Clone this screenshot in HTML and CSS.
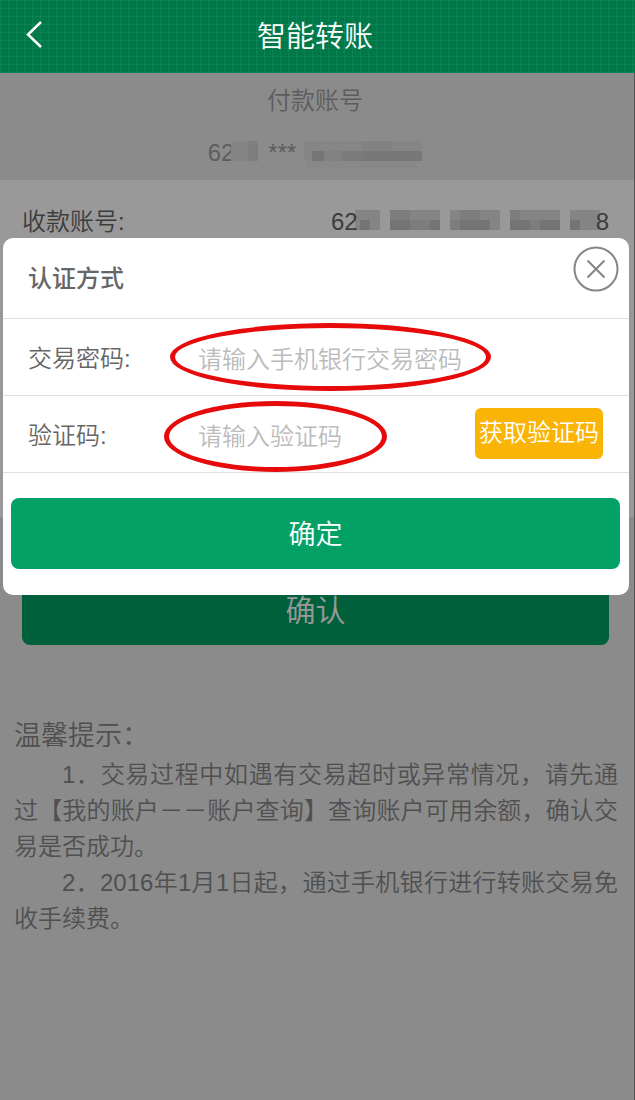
FILE: index.html
```html
<!DOCTYPE html>
<html lang="zh-CN">
<head>
	<meta charset="utf-8">
	<meta name="viewport" content="width=device-width, initial-scale=1">
	<title>智能转账</title>
	<link rel="stylesheet" href="styles.css">
</head>
<body>
	<header class="header">
		<a class="back" href="#" aria-label="返回">
			<svg width="18" height="28" viewBox="0 0 18 28"><path d="M16 2L3 14.5L16 27" fill="none" stroke="#fff" stroke-width="2.5"/></svg>
		</a>
		<h1 class="title">智能转账</h1>
	</header>

	<main class="page">
		<section class="payer">
			<p class="payer-label">付款账号</p>
			<p class="payer-number">
				<span>62</span>
				<svg class="mosaic" width="26" height="24" viewBox="0 0 26 24">
					<rect x="-3" y="0" width="27" height="20" fill="#dcdcdc"/>
					<rect x="14" y="0" width="10" height="20" fill="#000" opacity="0.04"/>
				</svg>
				<span class="stars">***</span>
				<svg class="mosaic" width="118" height="24" viewBox="0 0 118 24">
					<rect x="0" y="0" width="118" height="20" fill="#000" opacity="0.03"/>
					<rect x="58" y="0" width="30" height="10" fill="#000" opacity="0.03"/>
					<rect x="8" y="10" width="12" height="10" fill="#000" opacity="0.12"/>
					<rect x="20" y="10" width="18" height="10" fill="#000" opacity="0.04"/>
					<rect x="38" y="10" width="20" height="10" fill="#000" opacity="0.09"/>
					<rect x="58" y="10" width="60" height="10" fill="#000" opacity="0.1"/>
					<rect x="2" y="20" width="110" height="8" fill="#000" opacity="0.02"/>
				</svg>
			</p>
		</section>

		<section class="form">
			<div class="payee">
				<span>收款账号:</span>
				<span class="payee-number">
					<span>62</span>
					<svg class="mosaic" width="238" height="24" viewBox="0 0 238 24">
						<g fill="#000">
							<g opacity="0.13">
								<rect x="-3" width="25" height="20"/><rect x="32" width="50" height="20"/><rect x="92" width="50" height="20"/><rect x="152" width="50" height="20"/><rect x="212" width="30" height="20"/>
							</g>
							<g opacity="0.12">
								<rect x="2" y="10" width="10" height="10"/><rect x="32" y="10" width="20" height="10"/><rect x="72" y="10" width="10" height="10"/><rect x="102" y="10" width="30" height="10"/><rect x="152" y="10" width="20" height="10"/><rect x="182" y="10" width="20" height="10"/><rect x="212" y="10" width="10" height="10"/>
							</g>
							<g opacity="0.05">
								<rect x="32" width="20" height="10"/><rect x="102" width="20" height="10"/><rect x="152" width="10" height="10"/><rect x="52" y="10" width="20" height="10"/><rect x="92" y="10" width="10" height="10"/><rect x="172" y="10" width="10" height="10"/>
							</g>
						</g>
						<path d="M4 20H236Q232 28 200 28H130Q80 22 20 28Q6 27 4 20Z" fill="#fff" opacity="0.35"/>
					</svg>
					<span>8</span>
				</span>
			</div>
		</section>

		<button class="btn btn-submit" type="button">确认</button>

		<section class="tips">
			<h2 class="tips-title">温馨提示：</h2>
			<p>1．交易过程中如遇有交易超时或异常情况，请先通过【我的账户－－账户查询】查询账户可用余额，确认交易是否成功。</p>
			<p>2．2016年1月1日起，通过手机银行进行转账交易免收手续费。</p>
		</section>
	</main>

	<div class="mask"></div>

	<form class="modal">
		<div class="modal-header">
			<h2 class="modal-title">认证方式</h2>
			<button class="modal-close" type="button" aria-label="关闭">
				<svg width="46" height="46" viewBox="0 0 46 46" fill="none" stroke="#858585" stroke-width="2"><circle cx="23" cy="23" r="21.5"/><path d="M14.5 14.5L31.5 31.5M31.5 14.5L14.5 31.5"/></svg>
			</button>
		</div>
		<div class="field">
			<label for="password">交易密码:</label>
			<input id="password" type="password" placeholder="请输入手机银行交易密码">
			<span class="mark mark-password"></span>
		</div>
		<div class="field">
			<label for="code">验证码:</label>
			<input id="code" type="text" placeholder="请输入验证码">
			<button class="btn-code" type="button">获取验证码</button>
			<span class="mark mark-code"></span>
		</div>
		<button class="btn btn-ok" type="submit">确定</button>
	</form>
</body>
</html>
```

FILE: styles.css
```css
* {
	box-sizing: border-box;
}

body {
	position: relative;
	display: flex;
	flex-direction: column;
	min-height: 100vh;
	margin: 0;
	font-family: "Liberation Sans", "Noto Sans CJK SC", sans-serif;
	font-size: 24px;
	font-weight: 350;
	line-height: 36px;
	color: #666;
}

h1, h2, p {
	margin: 0;
	font-weight: 350;
}

button, input {
	font: inherit;
	border: 0;
	padding: 0;
}

button {
	cursor: pointer;
}

/* header */
.header {
	position: relative;
	z-index: 2;
	display: grid;
	grid-template-columns: 60px 1fr 65px;
	align-items: center;
	height: 73px;
	background-color: #00784a;
	background-image:
		linear-gradient(rgba(60, 170, 120, 0.2) 1px, transparent 1px),
		linear-gradient(90deg, rgba(60, 170, 120, 0.2) 1px, transparent 1px);
	background-size: 8px 8px;
}

.back {
	display: flex;
	padding-left: 25px;
	padding-bottom: 5px;
}

.title {
	font-size: 29px;
	text-align: center;
	color: #fff;
}

/* page */
.page {
	flex: 1;
	background-color: #e8e8e8;
	border-right: 1px solid #8c8c8c;
}

.payer {
	display: flex;
	flex-direction: column;
	align-items: center;
	gap: 16px;
	height: 107px;
	padding: 10px 4px 0 0;
	color: #9c9c9c;
}

.payer-number {
	display: flex;
	align-items: center;
}

.stars {
	padding: 0 8px;
}

.mosaic {
	overflow: visible;
}

.form {
	min-height: 337px;
	background-color: #fff;
}

.payee {
	display: flex;
	justify-content: space-between;
	padding: 24px 25px 0 22px;
}

.payee-number {
	display: flex;
	align-items: center;
}

.btn {
	display: block;
	height: 71px;
	padding-top: 3px;
	border-radius: 8px;
	background-color: #04a167;
	color: #fff;
}

.btn-submit {
	width: calc(100% - 47px);
	margin: 57px 25px 0 22px;
	font-size: 30px;
	background-color: #00a063;
}

.tips {
	padding: 73px 16px 0 14px;
	text-align: justify;
	color: #858585;
}

.tips-title {
	margin-bottom: 3px;
	font-size: 27px;
}

.tips p {
	text-indent: 48px;
}

.mask {
	position: absolute;
	inset: 0;
	background-color: rgba(0, 0, 0, 0.4);
}

/* modal */
.modal {
	position: absolute;
	top: 238px;
	left: 3px;
	right: 6px;
	z-index: 3;
	padding-bottom: 26px;
	border-radius: 10px;
	background-color: #fff;
}

.modal-header {
	display: flex;
	justify-content: space-between;
	align-items: center;
	height: 81px;
	padding: 2px 10px 0 25px;
	border-bottom: 1px solid #e0e0e0;
}

.modal-title {
	font-size: 24px;
	font-weight: 500;
}

.modal-close {
	display: flex;
	align-self: flex-start;
	margin-top: 6px;
	background: none;
}

.field {
	position: relative;
	display: flex;
	align-items: center;
	height: 77px;
	padding: 4px 26px 0 25px;
	border-bottom: 1px solid #e0e0e0;
}

.field label {
	width: 170px;
}

.field input {
	flex: 1;
	min-width: 0;
	height: 42px;
	padding-top: 2px;
	background: none;
	color: #666;
	outline: none;
}

.field input::placeholder {
	color: #bbb;
	opacity: 1;
}

.btn-code {
	width: 128px;
	height: 51px;
	margin-bottom: 6px;
	border-radius: 6px;
	background-color: #fab405;
	color: #fff;
}

.btn-ok {
	width: calc(100% - 17px);
	margin: 25px 9px 0 8px;
	font-size: 27px;
}

/* red rings round the two inputs */
.mark {
	position: absolute;
	border: 5px solid #e60a0a;
	border-radius: 50%;
	pointer-events: none;
}

.mark-password {
	top: 4px;
	left: 167px;
	width: 321px;
	height: 68px;
}

.mark-code {
	top: 5px;
	left: 161px;
	width: 223px;
	height: 71px;
}
```
